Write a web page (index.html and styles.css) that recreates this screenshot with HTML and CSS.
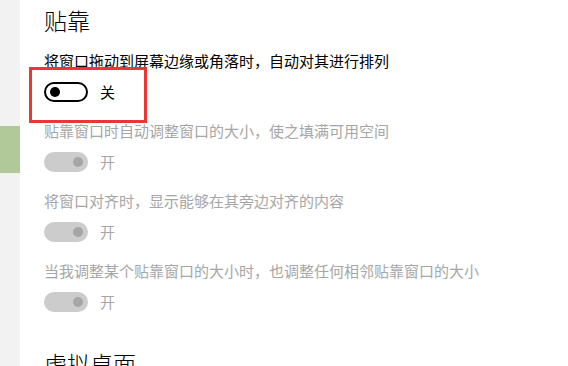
FILE: index.html
```html
<!DOCTYPE html>
<html lang="zh-CN">

<head>
    <meta charset="UTF-8">
    <title>贴靠</title>
    <link rel="stylesheet" href="styles.css">
</head>

<body>
    <div class="page">
        <div class="side">
            <div class="side-mark"></div>
        </div>

        <div class="main">
            <h2 class="title">贴靠</h2>

            <div class="item">
                <div class="desc">将窗口拖动到屏幕边缘或角落时，自动对其进行排列</div>
                <div class="row marked">
                    <span class="toggle"></span>
                    <span class="state">关</span>
                </div>
            </div>

            <div class="item disabled">
                <div class="desc">贴靠窗口时自动调整窗口的大小，使之填满可用空间</div>
                <div class="row">
                    <span class="toggle on"></span>
                    <span class="state">开</span>
                </div>
            </div>

            <div class="item disabled">
                <div class="desc">将窗口对齐时，显示能够在其旁边对齐的内容</div>
                <div class="row">
                    <span class="toggle on"></span>
                    <span class="state">开</span>
                </div>
            </div>

            <div class="item disabled">
                <div class="desc">当我调整某个贴靠窗口的大小时，也调整任何相邻贴靠窗口的大小</div>
                <div class="row">
                    <span class="toggle on"></span>
                    <span class="state">开</span>
                </div>
            </div>

            <h2 class="title next">虚拟桌面</h2>
        </div>
    </div>
</body>

</html>
```

FILE: styles.css
```css
body {
    margin: 0;
    background: #ffffff;
    font-family: 'Noto Sans CJK SC', 'Noto Sans', sans-serif;
    color: #000000;
    overflow: hidden;
}

.page {
    display: flex;
    height: 366px;
}

.side {
    width: 20px;
    flex-shrink: 0;
    background: #f2f2f2;
}

.side-mark {
    margin-top: 126px;
    height: 47px;
    background: #b1c898;
}

.main {
    flex: 1;
    padding: 5px 0 0 24px;
}

.title {
    margin: 0;
    font-size: 23px;
    font-weight: 300;
    line-height: 30px;
}

.title.next {
    margin-top: 36px;
}

.item {
    margin-top: 16px;
}

.item + .item {
    margin-top: 19px;
}

.desc {
    font-size: 15px;
    line-height: 20px;
    white-space: nowrap;
}

.row {
    display: flex;
    align-items: center;
    margin-top: 11px;
    height: 20px;
    position: relative;
}

/* red highlight around the first switch */
.row.marked::after {
    content: '';
    position: absolute;
    left: -15px;
    top: -15px;
    width: 112px;
    height: 50px;
    border: 3px solid #ee3535;
}

.toggle {
    width: 44px;
    height: 20px;
    box-sizing: border-box;
    border: 2px solid #000000;
    border-radius: 10px;
    position: relative;
}

.toggle::before {
    content: '';
    position: absolute;
    top: 3px;
    left: 4px;
    width: 10px;
    height: 10px;
    border-radius: 50%;
    background: #000000;
}

.toggle.on {
    border: none;
    background: #cccccc;
}

.toggle.on::before {
    top: 5px;
    left: 29px;
    background: #a6a6a6;
}

.state {
    margin-left: 12px;
    font-size: 15px;
    line-height: 20px;
}

.disabled .desc,
.disabled .state {
    color: #a6a6a6;
}
```
